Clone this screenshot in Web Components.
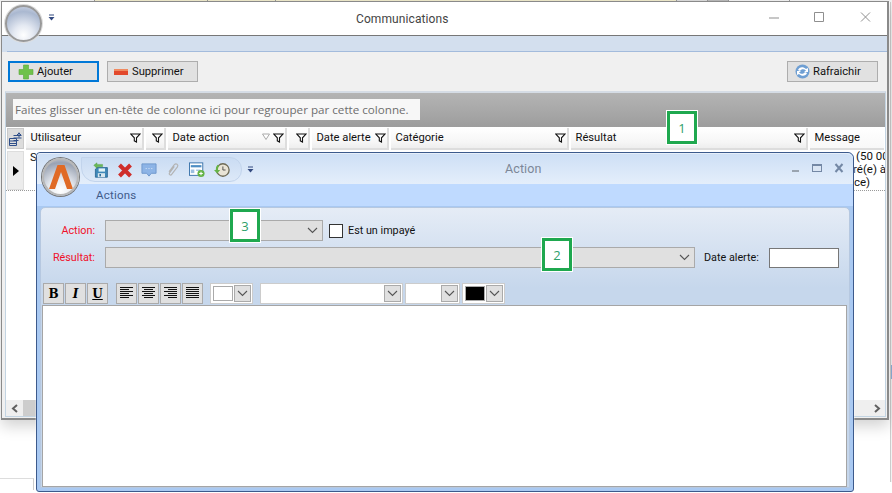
<!DOCTYPE html>
<html lang="fr"><head><meta charset="utf-8"><title>Communications</title>
<style>
html,body{margin:0;padding:0;background:#fff;width:892px;height:493px;overflow:hidden;font-family:Roboto,"Open Sans",sans-serif;font-size:11px;color:#111}
</style></head><body>
<x-desktop>
  <x-main-window></x-main-window>
  <x-action-window></x-action-window>
  <x-callout style="left:667px;top:111px">1</x-callout>
  <x-callout style="left:542px;top:238px">2</x-callout>
  <x-callout style="left:230px;top:209px">3</x-callout>
</x-desktop>
<script>
const def=(name,html)=>customElements.define(name,class extends HTMLElement{constructor(){super();this.attachShadow({mode:'open'}).innerHTML=typeof html==='function'?html(this):html;}});

def('x-desktop',`<style>:host{display:block;position:relative;width:892px;height:493px;overflow:hidden;background:#fff}
.top{position:absolute;left:0;top:0;right:0;height:2px;display:flex;background:#f4f4f4}
.top i{display:block;height:2px;border-right:1px solid #999}
.r{position:absolute;left:890px;top:2px;width:2px;height:480px;background:#f3f3f3;border-left:1px solid #ccc}
.r2{position:absolute;left:891px;top:365px;width:1px;height:14px;background:#8fb0d8}
.ghost{position:absolute;left:0;top:478px;width:33px;height:11px;border-top:1px solid #ddd;border-right:1px solid #ccc}
</style>
<div class="top"><i style="width:94px"></i><i style="width:112px;background:#f1eccd"></i><i style="width:67px;background:#f1eccd"></i><i style="width:400px;background:#f1eccd"></i><i style="width:30px;background:#ddd"></i><i style="width:20px;background:#bbb"></i><i style="width:60px"></i></div>
<div class="r"></div><div class="r2"></div><div class="ghost"></div><slot></slot>`);

def('x-callout',`<style>:host{position:absolute;box-sizing:border-box;width:30px;height:33px;display:flex;align-items:center;justify-content:center;background:#fff;border:3px solid #1fa84f;outline:1px solid #fff;color:#2e9f6a;font:13px "Open Sans",sans-serif;z-index:9}</style><slot></slot>`);

def('x-filter',`<style>:host{display:inline-block;width:11px;height:10px;flex:none}svg{display:block}</style><svg width="11" height="10" viewBox="0 0 11 10"><path d="M.8 1H10L6.500 4.800V9L4.300 7.800V4.800Z" fill="#fff" stroke="#111" stroke-width="1.100"/></svg>`);

def('x-head',`<style>:host{display:flex;align-items:center;box-sizing:border-box;height:22px;padding:0 1px 1px 4.500px;flex:none;background:linear-gradient(#fff,#f6f6f6 70%,#eee);border-right:2px solid #ddd;border-bottom:2px solid #ddd;margin-right:2px;color:#111;font-size:11.200px;white-space:nowrap;overflow:hidden}
span{flex:1}
:host([bare]) x-filter{display:none}</style><span><slot></slot></span><slot name="sort"></slot><x-filter></x-filter>`);

def('x-btn',`<style>:host{display:flex;align-items:center;box-sizing:border-box;width:91px;height:21px;background:#e1e1e1;border:1px solid #adadad;font-size:11.200px;color:#111;padding-left:6px;gap:4px;white-space:nowrap}
:host([focus]){border:2px solid #0078d7;padding-left:8px;gap:3px}</style><slot name="i"></slot><slot></slot>`);

def('x-grid',`<style>:host{display:block;position:relative;box-sizing:border-box;width:881px;height:326px;margin-left:3px;background:#fff;border:1px solid #c3d4e2;border-top:2px solid #d5dce5;overflow:hidden}
.group{height:34px;box-sizing:border-box;padding-top:6px;padding-left:7px;background:linear-gradient(#b4b4b4,#9d9d9d)}
.hint{box-sizing:border-box;width:407px;height:21px;background:#f7f7f7;color:#6e6e6e;display:flex;align-items:center;padding-left:2px;font:11.650px "Open Sans",sans-serif;white-space:nowrap}
.hdr{display:flex;height:24px;padding-left:1px;padding-top:1px;box-sizing:border-box;align-items:flex-start;background:#fff}
.corner{width:17px;height:21px;box-sizing:border-box;background:#dcdcdc;border:1px solid #c9c9c9;margin-right:2px;flex:none;display:flex;align-items:center;justify-content:center}
.row{position:relative;height:39px;border-bottom:1px dotted #999;display:flex;font-size:11.500px;line-height:13px;color:#111}
.ind{width:17px;height:39px;margin-left:1px;background:#ececec;border:1px solid #ddd;box-sizing:border-box;display:flex;align-items:center;justify-content:center;flex:none}
.s{padding:0 0 0 6px;width:800px;flex:none}
.m{white-space:nowrap;padding-left:26px;overflow:hidden;flex:1;margin-top:-1px}
.m span{display:block}
.sb{position:absolute;left:0;right:0;bottom:0;height:16px;background:#efefef;display:flex;justify-content:space-between;align-items:center}
.sb div{width:17px;height:16px;display:flex;align-items:center;justify-content:center}
.thumb{position:absolute;left:17px;width:300px;height:16px;background:#cdcdcd}
</style>
<div class="group"><div class="hint">Faites glisser un en-tête de colonne ici pour regrouper par cette colonne.</div></div>
<div class="hdr">
 <div class="corner"><svg width="13" height="14" viewBox="0 0 13 14" fill="none" stroke="#2f4f8a"><path d="M.5 6.500h7v7h-7zM.5 9h7M.5 11.500h7M4.500 3.500h8M4.500 6h8M4.500 8.500h5M10 .5v5M8 3l2-2 2 2" stroke-width="1"/></svg></div>
 <x-head style="width:118px">Utilisateur</x-head>
 <x-head style="width:20px"></x-head>
 <x-head style="width:119px">Date action<svg slot="sort" width="10" height="8" viewBox="0 0 10 8" style="margin-right:2px;margin-bottom:2px"><path d="M1.500 1h7L5 6.500z" fill="#fff" stroke="#aaa"/></svg></x-head>
 <x-head style="width:21px"></x-head>
 <x-head style="width:77px">Date alerte</x-head>
 <x-head style="width:178px">Catégorie</x-head>
 <x-head style="width:237px">Résultat</x-head>
 <x-head bare style="width:74px;border-right:0;background:linear-gradient(#fff,#f8f8f8)">Message</x-head>
</div>
<div class="row"><div class="ind"><svg width="6" height="10"><path d="M0 0l6 5-6 5z" fill="#000"/></svg></div><div class="s">S</div><div class="m"><span>(50 00</span><span style="margin-left:-3px">ré(e) à</span><span style="margin-left:-2px">ce)</span></div></div>
<div class="sb"><div><svg width="8" height="9"><path d="M6 1L2 4.500 6 8" fill="none" stroke="#606060" stroke-width="2"/></svg></div><span class="thumb"></span><div><svg width="8" height="9"><path d="M2 1l4 3.500L2 8" fill="none" stroke="#606060" stroke-width="2"/></svg></div></div>`);

def('x-main-window',`<style>:host{position:absolute;left:1px;top:1px;width:888px;height:419px;box-sizing:border-box;border:1px solid #8a8a8a;border-width:1px 2px 2px 1px;background:#f0f0f0;box-shadow:0 6px 14px rgba(0,0,0,.18);display:flex;flex-direction:column}
.title{height:33px;background:#fff;border-bottom:1px solid #777;display:flex;align-items:center;position:relative;flex:none}
.orb{margin-left:3px;width:37px;height:37px;border-radius:50%;margin-top:10px;box-sizing:border-box;border:2px solid #999;background:radial-gradient(circle at 50% 85%,#fff 0,#e4e9f2 30%,#aab8d0 72%,#d6dcea 100%);box-shadow:0 0 0 1px #ddd;flex:none;position:relative;z-index:2}
.drop{margin-left:6px;margin-top:-3px}
.cap{position:absolute;left:354px;top:10px;color:#444;font-size:12px;letter-spacing:.1px}
.wc{margin-left:auto;margin-right:16px;margin-top:-4px}
.band{height:16px;background:#d3dfee;border-bottom:1px solid #a3bbdc;margin-left:5px;box-sizing:border-box;flex:none;box-shadow:-5px 0 0 #d3dfee}
.bar{display:flex;align-items:center;height:39px;flex:none;padding:0 9px 0 6px;gap:8px;box-sizing:border-box}
</style>
<div class="title"><div class="orb"></div>
<svg class="drop" width="7" height="7" viewBox="0 0 7 7"><path d="M1 1h5" stroke="#334a80"/><path d="M.5 3h6L3.500 6.500z" fill="#334a80"/></svg>
<div class="cap">Communications</div>
<svg class="wc" width="102" height="20" viewBox="0 0 102 20" fill="none" stroke="#8f8f8f"><path d="M0 11h10M45.500 5.500h9v9h-9zM92 5.500l9 9M101 5.500l-9 9"/></svg>
</div>
<div class="band"></div>
<div class="bar">
<x-btn focus><svg slot="i" width="16" height="16" viewBox="0 0 16 16"><path d="M5.500 1h5v4.500H15v5h-4.500V15h-5v-4.500H1v-5h4.500z" fill="#6fc24a" stroke="#5aa83a" stroke-width=".6"/></svg>Ajouter</x-btn>
<x-btn><svg slot="i" width="14" height="10" viewBox="0 0 14 10"><rect y="2" width="14" height="6" fill="#e2492c"/><rect y="2" width="14" height="2" fill="#f08a60"/></svg>Supprimer</x-btn>
<x-btn style="margin-left:auto;padding-left:7px;gap:3px"><svg slot="i" width="15" height="15" viewBox="0 0 15 15"><circle cx="7.500" cy="7.500" r="7" fill="#6f9fd3"/><path d="M3 6c1-3 5-4 8-1l2-1v4H9l2-1.500C9 4.500 6 5 5 7zM12 9c-1 3-5 4-8 1l-2 1V7h4L4 8.500C6 10.500 9 10 10 8z" fill="#fff"/></svg>Rafraichir</x-btn>
</div>
<x-grid></x-grid>`);

def('x-chev',`<style>:host{display:inline-flex;align-items:center;justify-content:center;flex:none}svg{display:block}</style><svg width="11" height="7" viewBox="0 0 11 7"><path d="M1 1l4.500 4.500L10 1" fill="none" stroke="#555" stroke-width="1.100"/></svg>`);

def('x-combo',`<style>:host{display:flex;box-sizing:border-box;height:21px;background:#e0e0e0;border:1px solid #aaa;align-items:center;justify-content:flex-end;padding-right:4px;flex:none}</style><x-chev></x-chev>`);

def('x-fmt',`<style>:host{display:flex;align-items:center;justify-content:center;box-sizing:border-box;width:21px;height:21px;background:#e0e0e0;border:1px solid #aaa;flex:none;font:bold 12px "DejaVu Serif",serif;color:#000}</style><slot></slot>`);

def('x-picker',`<style>:host{display:flex;box-sizing:border-box;height:21px;background:#fff;border:1px solid #ccc;flex:none;align-items:center;padding-right:1px;justify-content:flex-end}
.sw{display:none;box-sizing:border-box;width:20px;height:15px;border:1px solid #aaa;margin-left:2px;margin-right:auto;background:var(--c,#fff)}
:host([swatch]) .sw{display:block}
.b{box-sizing:border-box;width:17px;height:17px;background:#e0e0e0;border:1px solid #aaa;display:flex;align-items:center;justify-content:center}</style><div class="sw"></div><div class="b"><x-chev></x-chev></div>`);

const lines=(ws)=>`<svg width="15" height="13" viewBox="0 0 15 13" stroke="#111" stroke-width="1" shape-rendering="crispEdges">`+ws.map((w,i)=>`<path d="M${w[0]} ${i*2+.5}H${w[1]}"/>`).join('')+`</svg>`;

def('x-action-window',`<style>:host{position:absolute;left:36px;top:152px;width:818px;height:340px;box-sizing:border-box;border:1px solid #3c5a8c;border-radius:4px 6px 3px 3px;background:#a9c9f2;display:flex;flex-direction:column;z-index:5;box-shadow:0 0 0 1px rgba(255,255,255,.25)}
.title{height:31px;flex:none;background:linear-gradient(#cddff5,#e4eefb);position:relative;display:flex;align-items:center;border-radius:4px 6px 0 0;box-shadow:inset 0 1px 0 #e6effa}
.orb{position:absolute;left:5px;top:5px;width:37px;height:38px;border-radius:50%;box-sizing:border-box;border:2px solid #b8b8b8;background:radial-gradient(circle at 50% 90%,#fff 0,#e8ebf0 35%,#9aa3b3 80%,#c8ccd4 100%);box-shadow:0 0 0 1px #777;z-index:3;display:flex;align-items:center;justify-content:center;overflow:hidden}
.qat{position:absolute;left:44px;top:4px;width:161px;height:25px;background:linear-gradient(#cadcf3,#dde9f8);border:1px solid #c2d4ec;border-radius:0 12px 12px 14px;box-sizing:border-box;display:flex;align-items:center;padding-left:11px}
.qat svg{flex:none;width:16px;height:16px}
.drop{position:absolute;left:210px;top:13px}
.cap{position:absolute;left:468px;top:8px;color:#7c8797;font-size:12.500px;letter-spacing:.1px}
.wc{position:absolute;right:7px;top:10px}
.tab{height:22px;flex:none;background:#bfdaff;color:#3f5a8a;font-size:11.500px;letter-spacing:.2px;padding-left:59px;line-height:22px;box-sizing:border-box}
.panel{flex:1;margin:1px 3px 3px;box-sizing:border-box;border:1px solid #b6c8e0;border-radius:5px 5px 0 0;background:linear-gradient(#e5ecf6,#c6d7ec 80px,#c6d7ec);display:flex;flex-direction:column;padding:0 0 0 2px;min-height:0}
.r{display:flex;align-items:center;flex:none}
.lab{width:53px;text-align:right;color:#f0102a;font-size:10.800px;flex:none;margin-left:-1px;margin-right:10px}
.chk{width:14px;height:14px;box-sizing:border-box;background:#fff;border:1px solid #333;margin-left:6px;margin-right:5px;flex:none}
.date{box-sizing:border-box;width:70px;height:20px;background:#fff;border:1px solid #777;flex:none}
.t{font-size:10.800px}
.ed{flex:1;background:#fff;border:1px solid #a5a5a5;margin-right:2px;margin-top:1px;margin-left:-1px}
</style>
<div class="title">
 <div class="orb"><svg width="26" height="28" viewBox="0 0 26 28"><path d="M9.500 2h7L25 26h-6L13 9 7 26H1z" fill="#e06a25"/></svg></div>
 <div class="qat">
  <svg viewBox="0 0 20 20" style="margin-right:8px"><path d="M5 7h13v12H3V9z" fill="#3f88b8" stroke="#23628e"/><rect x="7" y="8" width="8" height="4" fill="#dff2f7"/><rect x="6" y="14" width="9" height="5" fill="#d8e6ee"/><rect x="8" y="15" width="2" height="3" fill="#2b6d99"/><path d="M1 4l4-3v2h7v3H5v2z" fill="#69b856" stroke="#4e9a3e" stroke-width=".5"/></svg>
  <svg viewBox="0 0 16 16" style="margin-right:8px"><path d="M2.500 3L13.500 14M13.500 3L2.500 14" stroke="#cf2d2a" stroke-width="4"/></svg>
  <svg viewBox="0 0 17 17" style="margin-right:8px"><path d="M1 2h15v10h-5l-2.500 3L6 12H1z" fill="#8db4e6" stroke="#6d96cc"/><path d="M5 7h1M8 7h1M11 7h1" stroke="#e7f0fb"/></svg>
  <svg viewBox="0 0 17 18" style="margin-right:8px"><path d="M4 11l6-8c2-2 5 0 3.500 2.500L7 14c-1 1.500-3.500 0-2.500-1.500L10 5" fill="none" stroke="#b3b3b3" stroke-width="1.300"/></svg>
  <svg viewBox="0 0 18 17" style="margin-right:9px"><rect x=".5" y=".5" width="15" height="14" fill="#fff" stroke="#2f6ba6"/><rect x="2" y="3" width="12" height="2.500" fill="#4f8ec4"/><rect x="2" y="8" width="4" height="4" fill="#9bbfe0"/><rect x="8" y="8" width="5" height="1.500" fill="#9bbfe0"/><circle cx="13.500" cy="12.500" r="4" fill="#64b345"/><path d="M13.500 10.500v4M11.500 12.500h4" stroke="#fff" stroke-width="1.200"/></svg>
  <svg viewBox="0 0 18 18"><circle cx="10" cy="9" r="7" fill="#e9e4d6" stroke="#6e6a55" stroke-width="1.500"/><path d="M10 5v4h3" fill="none" stroke="#444"/><path d="M4 3a7 7 0 0 0-2 6H0l3.500 4L7 9H4.500A5 5 0 0 1 6 4.500z" fill="#66b347"/></svg>
 </div>
 <svg class="drop" width="7" height="7" viewBox="0 0 7 7"><path d="M1 1h5" stroke="#334a80"/><path d="M.5 3h6L3.500 6.500z" fill="#334a80"/></svg>
 <div class="cap">Action</div>
 <svg class="wc" width="54" height="11" viewBox="0 0 54 11"><rect x="0" y="7" width="7" height="2" fill="#9aa4b0"/><rect x="20.500" y="1.500" width="9" height="7" fill="#dbe6f4" stroke="#7488a5"/><rect x="20" y="1" width="10" height="2" fill="#7488a5"/><path d="M43.500 1l7 8M50.500 1l-7 8" stroke="#7488a5" stroke-width="2"/></svg>
</div>
<div class="tab">Actions</div>
<div class="panel">
 <div class="r" style="margin-top:12px"><div class="lab">Action:</div><x-combo style="width:218px"></x-combo><div class="chk"></div><span class="t">Est un impayé</span></div>
 <div class="r" style="margin-top:6px"><div class="lab">Résultat:</div><x-combo style="width:590px"></x-combo><span class="t" style="margin-left:9px;width:65px;white-space:nowrap">Date alerte:</span><div class="date"></div></div>
 <div class="r" style="margin-top:15px;gap:1px">
  <x-fmt>B</x-fmt><x-fmt style="font-style:italic">I</x-fmt><x-fmt style="text-decoration:underline">U</x-fmt>
  <x-fmt style="margin-left:7px">${lines([[1,14],[1,10],[1,14],[1,10],[1,14],[1,10]])}</x-fmt><x-fmt>${lines([[1,14],[3,12],[1,14],[3,12],[1,14],[3,12]])}</x-fmt><x-fmt>${lines([[1,14],[5,14],[1,14],[5,14],[1,14],[5,14]])}</x-fmt><x-fmt>${lines([[1,14],[1,14],[1,14],[1,14],[1,14],[1,14]])}</x-fmt>
  <x-picker swatch style="width:43px;margin-left:6px"></x-picker>
  <x-picker style="width:143px;margin-left:6px"></x-picker>
  <x-picker style="width:55px;margin-left:1px"></x-picker>
  <x-picker swatch style="width:43px;margin-left:1px;--c:#000"></x-picker>
 </div>
 <div class="ed"></div>
</div>`);
</script>
</body></html>
